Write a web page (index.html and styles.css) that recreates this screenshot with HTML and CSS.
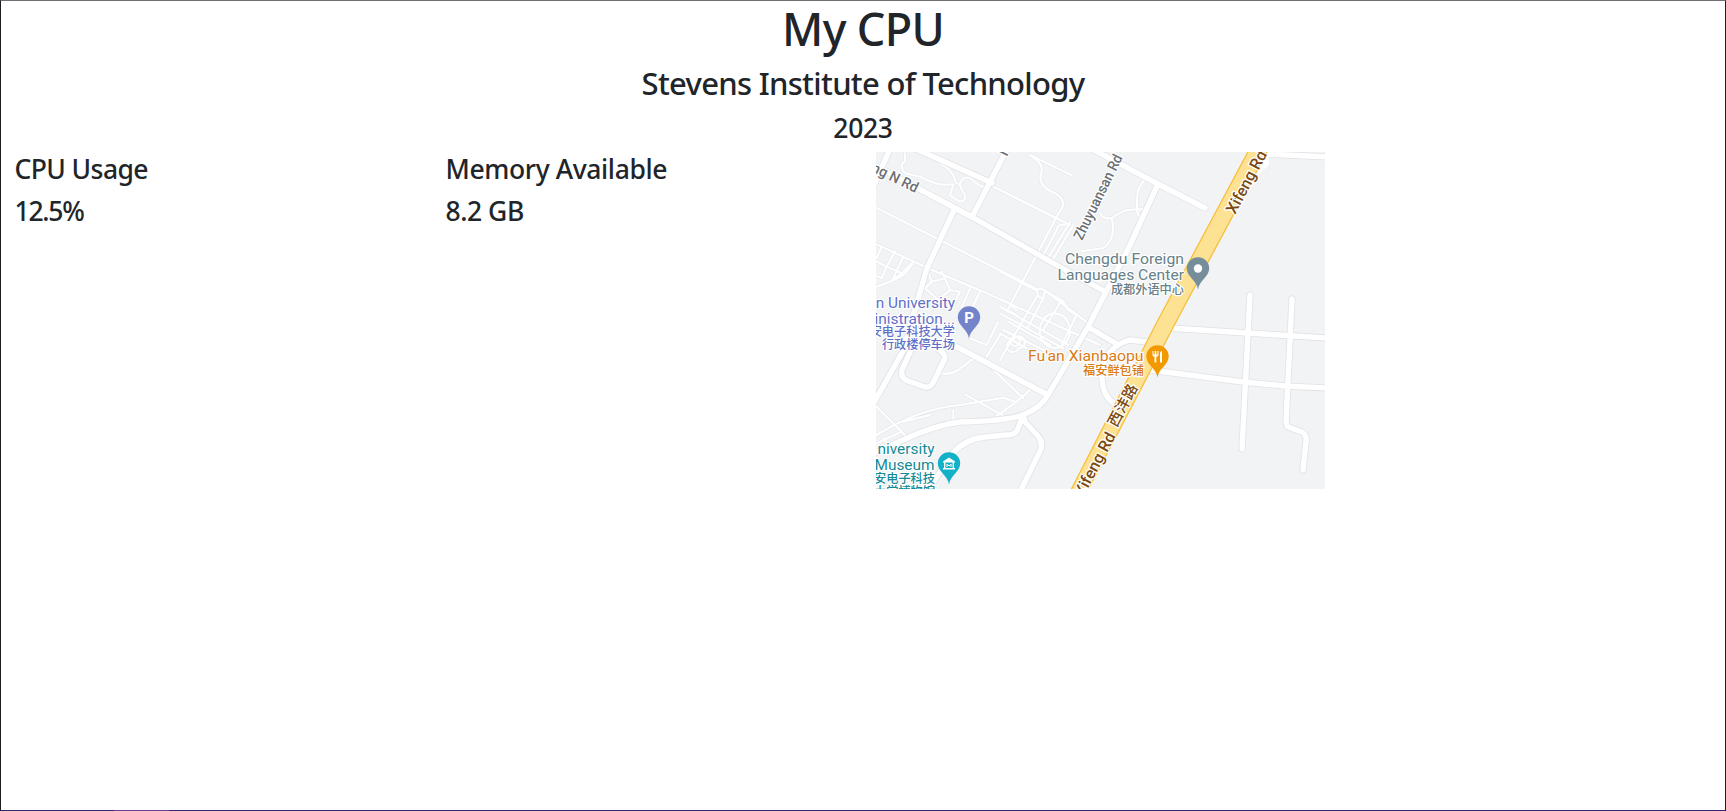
FILE: index.html
```html
<!DOCTYPE html>
<html lang="en">
<head>
<meta charset="utf-8">
<title>My CPU</title>
<link rel="stylesheet" href="styles.css">
</head>
<body>
<div class="page">
  <header class="heading">
    <h1 class="title">My CPU</h1>
    <h2 class="school">Stevens Institute of Technology</h2>
    <h4 class="year">2023</h4>
  </header>
  <main class="row">
    <section class="col">
      <h4 class="cpu-label">CPU Usage</h4>
      <h4 class="cpu-value">12.5%</h4>
    </section>
    <section class="col">
      <h4 class="mem-label">Memory Available</h4>
      <h4 class="mem-value">8.2 GB</h4>
    </section>
    <section class="col">
      <svg class="map" viewBox="876 152 449 337" width="449" height="337" role="img" aria-label="Map">
        <defs>
          <g id="minor">
            <g transform="translate(870 145) scale(.33333)">
              <path d="M178 20Q185 45 225 65Q250 80 258 115L270 118Q272 95 300 98Q320 120 345 128M105 25V50Q85 60 105 85L150 95Q200 125 250 118L240 152L270 170Q290 168 284 150L268 118"/>
              <path d="M18 188L500 432M370 125L600 240M480 30L608 92M20 298L170 368L340 440L690 600M500 330L560 215L578 185Q585 155 545 140Q500 120 515 80Q520 55 485 35"/>
              <path d="M610 240L545 350M585 240Q565 235 560 255L515 340M600 232L530 345M500 330L410 500"/>
              <path d="M20 350L50 365L75 320M50 365L35 400L18 392M50 365L95 385L130 350M95 385L60 410L20 425M130 350Q110 395 60 410M35 305L20 340M100 335L70 400M170 370L185 410L165 430L205 465M185 410L225 400L215 380M225 400L240 435L205 465M240 435L270 440L250 480M300 430L270 500M330 440L300 500"/>
            </g>
            <g transform="translate(1000 230) scale(.33333)">
              <path d="M0 125L110 182M135 182L265 280M0 230L205 345M0 250L190 355M110 182L115 200L130 205L135 182L120 175ZM135 182L190 215L205 240M110 200L0 390M130 205L85 290M185 210L130 300M205 240L230 255L185 345M0 310L80 355"/>
              <path d="M165 250A45 52 0 1 1 164 250M45 320A14 14 0 1 0 46 320M20 240L50 255M30 225L50 240"/>
            </g>
            <g transform="translate(1000 148) scale(.33333)">
              <path d="M435 95Q410 120 412 145L410 185L435 182M410 185Q375 180 335 210Q310 215 300 195M410 185L420 215M335 210Q350 270 310 300L245 310"/>
            </g>
            <g transform="translate(870 315) scale(.33333)">
              <path d="M210 175Q240 180 265 165L310 130M350 145L460 250M480 225L440 260L370 310M20 360Q150 280 270 270L400 248L440 262M285 238L405 305M250 285V320M20 275L110 365M40 370L60 395M100 320L180 300M20 385L95 350M390 60L350 125M430 75A18 18 0 1 0 445 100A18 18 0 1 0 430 75M415 20L540 90M400 45L530 110M300 70L350 90L385 20"/>
            </g>
          </g>
          <g id="major">
            <path d="M870 163L972 217L1060 267L1104 291M916 149L992 183M1007 149L972 217M955 208L927 268L903 351L872 406M890 149L870 194"/>
            <path d="M1092 149L1158 184L1205 208M1158 184L1130 245L1088 327L1048 395Q1042 407 1023 415Q1005 421 960 422Q937 425 907 438L868 456M957 347L1048 395M1088 327L1117 344M1147 342L1130 340Q1110 345 1102 366Q1100 398 1116 404"/>
            <path d="M912 348L902 370Q900 378 908 381L925 387Q931 388 934 381L945 358Q944 352 938 349M1023 415L1017 431Q1014 435 1006 435L985 437Q965 439 953 453L928 490M1023 415L1025 422L1038 436Q1043 442 1041 449L1021 490"/>
            <path d="M1170 328L1247 333L1327 338M1150 370L1243 382L1285 386L1327 388M1250 295L1242 449M1292 299L1286 422Q1286 427 1291 428L1302 432Q1307 435 1306 442L1303 470M1265 154L1330 157"/>
          </g>
          <path id="pin" d="M0 21C-1.2 12-11.2 8-11.2 0A11.2 11.2 0 0 1 11.2 0C11.2 8 1.2 12 0 21Z"/>
        </defs>
        <rect class="land" x="876" y="152" width="449" height="337"/>
        <use class="minor-case" href="#minor"/>
        <use class="minor-fill" href="#minor"/>
        <use class="major-case" href="#major"/>
        <use class="major-fill" href="#major"/>
        <path d="M1264 151L1269 158V165L1257 176Z" fill="#fff"/>
        <path class="highway" d="M1249 150L1158 320L1071 490H1088L1177 320L1268 150Z"/>

        <g class="label road">
          <text text-anchor="end" textLength="50" lengthAdjust="spacingAndGlyphs" transform="translate(915.500 193) rotate(26)">ng N Rd</text>
          <text textLength="93" lengthAdjust="spacingAndGlyphs" transform="translate(1082 241) rotate(-64)">Zhuyuansan Rd</text>
          <text transform="translate(1007 157) rotate(-64)">N</text>
        </g>
        <g class="label highway-name">
          <text textLength="69" lengthAdjust="spacingAndGlyphs" transform="translate(1235 215) rotate(-62)">Xifeng Rd</text>
          <text text-anchor="end" textLength="70" lengthAdjust="spacingAndGlyphs" transform="translate(1116 436) rotate(-62)">Xifeng Rd</text>
          <text class="cn" textLength="46" transform="translate(1116.500 428) rotate(-62)">西沣路</text>
        </g>
        <g class="label grey" text-anchor="end">
          <text x="1184" y="264" textLength="119" lengthAdjust="spacingAndGlyphs">Chengdu Foreign</text>
          <text x="1184" y="280" textLength="126.500" lengthAdjust="spacingAndGlyphs">Languages Center</text>
          <text class="cn" x="1184" y="293.500">成都外语中心</text>
        </g>
        <g class="label blue" text-anchor="end">
          <text x="955" y="308">n University</text>
          <text x="955" y="323.500">inistration...</text>
          <text class="cn" x="955" y="336">安电子科技大学</text>
          <text class="cn" x="955" y="348.500">行政楼停车场</text>
        </g>
        <g class="label orange" text-anchor="end">
          <text x="1143.500" y="361" textLength="115.500" lengthAdjust="spacingAndGlyphs">Fu'an Xianbaopu</text>
          <text class="cn" x="1144" y="374.500">福安鲜包铺</text>
        </g>
        <g class="label teal" text-anchor="end">
          <text x="934.500" y="454">niversity</text>
          <text x="934.500" y="470">Museum</text>
          <text class="cn" x="935" y="483">安电子科技</text>
          <text class="cn" x="935" y="495.500">大学博物馆</text>
        </g>

        <g transform="translate(1198 268.500)"><use href="#pin" fill="#758e9a"/><circle r="4.200" fill="#fff"/></g>
        <g transform="translate(969 317.500)"><use href="#pin" fill="#7484cb"/><text class="pin-letter" y="5" text-anchor="middle">P</text></g>
        <g transform="translate(1157.500 356.500)"><use href="#pin" fill="#f29900"/><path d="M-5-5.500V-1.500Q-5 0-3.500 0H-3V6H-1.200V0H-.500Q1 0 1-1.500V-5.500H0V-2H-1.200V-5.500H-2.800V-2H-4V-5.500ZM2.500 6V-3Q2.500-5.500 4.500-5.500V6Z" fill="#fff"/></g>
        <g transform="translate(949 463.500)"><use href="#pin" fill="#12b1c8"/><path d="M-6-2L0-6L6-2V-1H-6ZM-6 4.500H6V6H-6ZM-5-1H-3.600V4.500H-5ZM3.600-1H5V4.500H3.600Z" fill="#fff"/><path d="M-2 3.500V.500L0 2.500L2 .500V3.500" fill="none" stroke="#fff"/></g>
      </svg>
    </section>
  </main>
</div>
</body>
</html>
```
FILE: styles.css
```css
* { box-sizing: border-box; }

body {
  margin: 0;
  background: #fff;
  color: #212529;
  font-family: "Noto Sans", "Open Sans", sans-serif;
}

.page {
  height: 811px;
  border: 1px solid #1d1c20;
  border-top-color: #716e75;
  border-bottom: 0;
  background: linear-gradient(90deg, #35276a 113px, #70418f 113px 168px, #35276a 168px) bottom / 100% 1px no-repeat;
}

.heading { text-align: center; }

h1, h2, h4 {
  width: max-content;
  margin: 0 0 8px;
  padding-top: 1px;
  font-weight: 500;
  line-height: 1.2;
  white-space: nowrap;
}

.heading > * { margin-left: auto; margin-right: auto; }

.title { font-size: 45px; letter-spacing: -.7px; }
.school { font-size: 31px; letter-spacing: -.7px; line-height: 37.8px; }
h4 { font-size: 26.5px; line-height: 32.4px; }
.year { letter-spacing: -.3px; }
.cpu-label { letter-spacing: -.58px; }
.cpu-value { letter-spacing: -1.25px; }
.mem-label { letter-spacing: -.38px; }
.mem-value { letter-spacing: -.45px; }

.row { display: flex; }

.col {
  width: 25%;
  padding: 0 13.5px;
}

.map { display: block; margin-left: -1px; }

.land { fill: #f1f3f4; }

#minor path, #major path { vector-effect: non-scaling-stroke; }

.minor-case, .minor-fill, .major-case, .major-fill {
  fill: none;
  stroke-linecap: round;
  stroke-linejoin: round;
}
.minor-case { stroke: #e7e9ec; stroke-width: 3.4px; }
.minor-fill { stroke: #fff; stroke-width: 2.1px; }
.major-case { stroke: #e0e2e7; stroke-width: 7px; }
.major-fill { stroke: #fff; stroke-width: 5.4px; }

.highway { fill: #fde293; stroke: #f9bf3c; stroke-width: 1.3px; }

.label {
  font: 400 15.4px Roboto, "Noto Sans CJK SC", sans-serif;
  paint-order: stroke;
  stroke: #fff;
  stroke-width: 2.4px;
  stroke-linejoin: round;
}
.label .cn { font-size: 12.2px; font-family: "Noto Sans CJK SC", sans-serif; font-weight: 500; }
.road { fill: #6b7075; font-size: 14.5px; font-weight: 500; }
.highway-name { fill: #7a4a12; font-weight: 500; font-size: 16px; }
.highway-name .cn { font-size: 15px; }
.grey { fill: #688088; }
.blue { fill: #5f6fc9; }
.orange { fill: #d97b16; }
.teal { fill: #138a96; }
.pin-letter { font: 700 15px Roboto, sans-serif; fill: #fff; }
```
